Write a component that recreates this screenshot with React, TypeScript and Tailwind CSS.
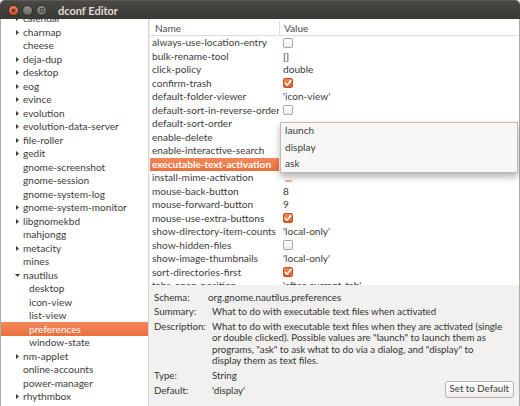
import React from "react";

type TreeItem = { label: string; arrow?: "right" | "down"; indent?: number; selected?: boolean };

const tree: TreeItem[] = [
  { label: "calendar", arrow: "right" },
  { label: "charmap", arrow: "right" },
  { label: "cheese" },
  { label: "deja-dup", arrow: "right" },
  { label: "desktop", arrow: "right" },
  { label: "eog", arrow: "right" },
  { label: "evince", arrow: "right" },
  { label: "evolution", arrow: "right" },
  { label: "evolution-data-server", arrow: "right" },
  { label: "file-roller", arrow: "right" },
  { label: "gedit", arrow: "right" },
  { label: "gnome-screenshot" },
  { label: "gnome-session" },
  { label: "gnome-system-log" },
  { label: "gnome-system-monitor", arrow: "right" },
  { label: "libgnomekbd", arrow: "right" },
  { label: "mahjongg" },
  { label: "metacity", arrow: "right" },
  { label: "mines" },
  { label: "nautilus", arrow: "down" },
  { label: "desktop", indent: 1 },
  { label: "icon-view", indent: 1 },
  { label: "list-view", indent: 1 },
  { label: "preferences", indent: 1, selected: true },
  { label: "window-state", indent: 1 },
  { label: "nm-applet", arrow: "right" },
  { label: "online-accounts" },
  { label: "power-manager" },
  { label: "rhythmbox", arrow: "right" },
];

type Val = { t: "text"; v: string } | { t: "check"; on: boolean } | { t: "none" } | { t: "dash" };
type Row = { name: string; value: Val; selected?: boolean };

const rows: Row[] = [
  { name: "always-use-location-entry", value: { t: "check", on: false } },
  { name: "bulk-rename-tool", value: { t: "text", v: "[]" } },
  { name: "click-policy", value: { t: "text", v: "double" } },
  { name: "confirm-trash", value: { t: "check", on: true } },
  { name: "default-folder-viewer", value: { t: "text", v: "'icon-view'" } },
  { name: "default-sort-in-reverse-order", value: { t: "check", on: false } },
  { name: "default-sort-order", value: { t: "none" } },
  { name: "enable-delete", value: { t: "none" } },
  { name: "enable-interactive-search", value: { t: "none" } },
  { name: "executable-text-activation", value: { t: "none" }, selected: true },
  { name: "install-mime-activation", value: { t: "dash" } },
  { name: "mouse-back-button", value: { t: "text", v: "8" } },
  { name: "mouse-forward-button", value: { t: "text", v: "9" } },
  { name: "mouse-use-extra-buttons", value: { t: "check", on: true } },
  { name: "show-directory-item-counts", value: { t: "text", v: "'local-only'" } },
  { name: "show-hidden-files", value: { t: "check", on: false } },
  { name: "show-image-thumbnails", value: { t: "text", v: "'local-only'" } },
  { name: "sort-directories-first", value: { t: "check", on: true } },
  { name: "tabs-open-position", value: { t: "text", v: "'after-current-tab'" } },
];

function Arrow({ dir }: { dir: "right" | "down" }) {
  if (dir === "down") {
    return (
      <svg width="5" height="3" viewBox="0 0 5 3" className="block">
        <path d="M0 0 L5 0 L2.5 3 Z" fill="#3c3c3c" />
      </svg>
    );
  }
  return (
    <svg width="3" height="5" viewBox="0 0 3 5" className="block">
      <path d="M0 0 L3 2.5 L0 5 Z" fill="#3c3c3c" />
    </svg>
  );
}

function Check({ on }: { on: boolean }) {
  if (on) {
    return (
      <div className="w-[10px] h-[10px] rounded-[2px] border border-[#c4501f] bg-gradient-to-b from-[#f28a5c] to-[#e0602a] flex items-center justify-center">
        <svg width="8" height="8" viewBox="0 0 8 8">
          <path d="M1.2 4.2 L3.2 6.2 L6.8 1.6" stroke="white" strokeWidth="1.6" fill="none" strokeLinecap="round" strokeLinejoin="round" />
        </svg>
      </div>
    );
  }
  return <div className="w-[10px] h-[10px] rounded-[2px] border border-[#a9a7a2] bg-gradient-to-b from-white to-[#f0efed]" />;
}

function Value({ v }: { v: Val }) {
  if (v.t === "text") return <span>{v.v}</span>;
  if (v.t === "check") return <Check on={v.on} />;
  if (v.t === "dash") return <div className="w-[7px] h-[2px] mt-[7px] ml-[2px] bg-[#f3b3a0]" />;
  return null;
}

export default function App() {
  return (
    <div
      className="w-[520px] h-[406px] overflow-hidden bg-[#f2f1f0] flex flex-col text-[#3c3c3c] text-[10.1px]"
      style={{ fontFamily: "Lato, 'Liberation Sans', sans-serif" }}
    >
      {/* Title bar */}
      <div className="h-[19px] shrink-0 rounded-t-[5px] bg-gradient-to-b from-[#4a4945] to-[#3a3935] flex items-center pl-[8px] border-t border-[#5b5a56]">
        <div className="flex items-center gap-[3px]">
          <div className="w-[11px] h-[11px] rounded-full bg-gradient-to-b from-[#f5825a] to-[#de4a1c] border border-[#2e2d29] flex items-center justify-center">
            <svg width="5" height="5" viewBox="0 0 5 5">
              <path d="M0.8 0.8 L4.2 4.2 M4.2 0.8 L0.8 4.2" stroke="#3a2a22" strokeWidth="1.1" />
            </svg>
          </div>
          <div className="w-[11px] h-[11px] rounded-full bg-gradient-to-b from-[#8e8c86] to-[#6c6b66] border border-[#2e2d29]" />
          <div className="w-[11px] h-[11px] rounded-full bg-gradient-to-b from-[#8e8c86] to-[#6c6b66] border border-[#2e2d29] flex items-center justify-center">
            <div className="w-[4px] h-[4px] border border-[#4a4945]" />
          </div>
        </div>
        <span className="ml-[11px] text-[#dfdbd2] font-bold text-[11px] leading-none">dconf Editor</span>
      </div>

      {/* Body */}
      <div className="flex-1 flex min-h-0 border-l border-r border-[#aeaca8]">
        {/* Left tree */}
        <div className="w-[148px] shrink-0 bg-white overflow-hidden border-r border-[#d6d5d2] mr-[1px]">
          <div className="mt-[-7.25px]">
            {tree.map((it, i) => (
              <div
                key={i}
                className={`h-[13.5px] flex items-center ${it.selected ? "bg-gradient-to-b from-[#f3875a] to-[#ec6f3d] text-white" : ""}`}
              >
                <div className={`${it.indent ? "w-[28px]" : "w-[22px]"} shrink-0 flex justify-end ${it.arrow === "down" ? "pr-[3px]" : "pr-[4px]"}`}>
                  {it.arrow && !it.indent ? <Arrow dir={it.arrow} /> : null}
                </div>
                <span className="whitespace-nowrap leading-none">{it.label}</span>
              </div>
            ))}
          </div>
        </div>

        {/* Right side */}
        <div className="flex-1 flex flex-col relative min-w-0">
          <div className="h-[266px] shrink-0 bg-white overflow-hidden">
            <div className="h-[17px] grid grid-cols-[129px_1fr] border-b border-[#dddcd9] text-[#4c4c4c]">
              <div className="pl-[5px] flex items-center">Name</div>
              <div className="pl-[4px] flex items-center border-l border-[#dddcd9] my-[2px]">Value</div>
            </div>
            {rows.map((r, i) => (
              <div key={i} className="h-[13.5px] grid grid-cols-[129px_1fr]">
                <div
                  className={`pl-[2px] flex items-center whitespace-nowrap overflow-hidden ${r.selected ? "bg-gradient-to-b from-[#f3875a] to-[#ec6f3d] text-white font-bold" : ""}`}
                >
                  {r.name}
                </div>
                <div className="pl-[4px] flex items-center whitespace-nowrap overflow-hidden">
                  <Value v={r.value} />
                </div>
              </div>
            ))}
          </div>

          {/* Info panel */}
          <div className="flex-1 bg-[#f2f1f0] pl-[4px] pr-[3px] pt-[6.5px] text-[#333333] text-[9.7px]">
            <div className="grid grid-cols-[58px_1fr] gap-y-[3.5px] leading-[11.3px]">
              <div>Schema:</div>
              <div className="ml-[-4px]">org.gnome.nautilus.preferences</div>
              <div>Summary:</div>
              <div>What to do with executable text files when activated</div>
              <div>Description:</div>
              <div className="whitespace-nowrap">
                What to do with executable text files when they are activated (single
                <br />
                or double clicked). Possible values are "launch" to launch them as
                <br />
                programs, "ask" to ask what to do via a dialog, and "display" to
                <br />
                display them as text files.
              </div>
              <div>Type:</div>
              <div>String</div>
              <div>Default:</div>
              <div className="flex justify-between items-start pr-[2px]">
                <span>'display'</span>
                <button className="mt-[-4px] h-[17px] px-[4px] rounded-[3px] border border-[#b6b4b0] bg-gradient-to-b from-white to-[#efeeec] text-[#3c3c3c] text-[9.7px] leading-none">
                  Set to Default
                </button>
              </div>
            </div>
          </div>

          {/* Popup menu */}
          <div className="absolute left-[130px] top-[102.5px] w-[238px] bg-[#f7f6f5] border border-[#bdbbb7] shadow-[0_4px_7px_rgba(0,0,0,0.3)]">
            {["launch", "display", "ask"].map((m) => (
              <div key={m} className="h-[16.5px] flex items-center pl-[4px]">
                {m}
              </div>
            ))}
          </div>
        </div>
      </div>
    </div>
  );
}
